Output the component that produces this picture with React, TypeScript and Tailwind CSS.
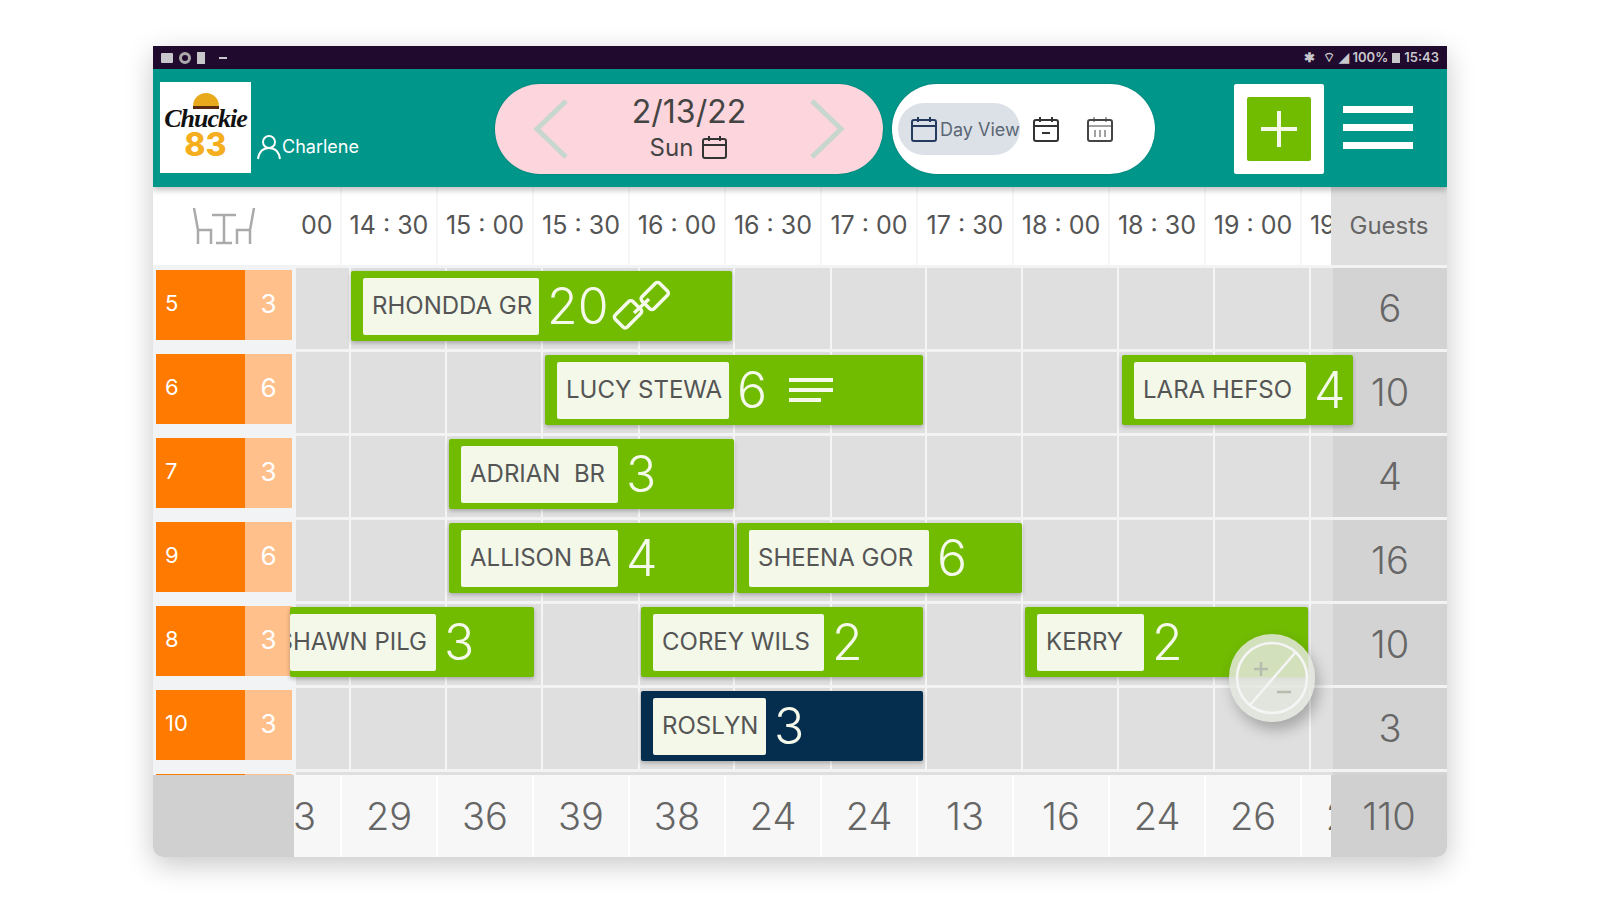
const slotW = 96

const slots = ['14 : 00', '14 : 30', '15 : 00', '15 : 30', '16 : 00', '16 : 30', '17 : 00', '17 : 30', '18 : 00', '18 : 30', '19 : 00', '19 : 30']
const totals = ['33', '29', '36', '39', '38', '24', '24', '13', '16', '24', '26', '22']

interface Booking {
  name: string
  guests: string
  start: number
  width: number
  dark?: boolean
  chip?: number
  clip?: boolean
  link?: boolean
  notes?: boolean
}

interface Row {
  table: string
  seats: string
  guests: string
  bookings: Booking[]
}

const rows: Row[] = [
  { table: '5', seats: '3', guests: '6', bookings: [{ name: 'RHONDDA GR', guests: '20', start: 55, width: 381, chip: 176, link: true }] },
  {
    table: '6',
    seats: '6',
    guests: '10',
    bookings: [
      { name: 'LUCY STEWA', guests: '6', start: 249, width: 378, chip: 172, notes: true },
      { name: 'LARA HEFSO', guests: '4', start: 826, width: 231, chip: 172 },
    ],
  },
  { table: '7', seats: '3', guests: '4', bookings: [{ name: 'ADRIAN  BR', guests: '3', start: 153, width: 285, chip: 157 }] },
  {
    table: '9',
    seats: '6',
    guests: '16',
    bookings: [
      { name: 'ALLISON BA', guests: '4', start: 153, width: 285, chip: 157 },
      { name: 'SHEENA GOR', guests: '6', start: 441, width: 285, chip: 180 },
    ],
  },
  {
    table: '8',
    seats: '3',
    guests: '10',
    bookings: [
      { name: 'SHAWN PILG', guests: '3', start: -6, width: 244, chip: 146, clip: true },
      { name: 'COREY WILS', guests: '2', start: 345, width: 282, chip: 171 },
      { name: 'KERRY', guests: '2', start: 729, width: 283, chip: 107 },
    ],
  },
  { table: '10', seats: '3', guests: '3', bookings: [{ name: 'ROSLYN', guests: '3', start: 345, width: 282, chip: 113, dark: true }] },
]

function GridLines({ color }: { color: string }) {
  return (
    <div className="absolute inset-0 flex">
      <div className={`w-[55px] h-full border-r-2 ${color}`} />
      {[96, 96, 97, 95, 97, 95, 96, 96, 96, 96].map((w, i) => (
        <div key={i} className={`h-full border-r-2 ${color}`} style={{ width: w }} />
      ))}
    </div>
  )
}

function LinkIcon() {
  return (
    <svg width="62" height="62" viewBox="0 0 62 62" fill="none" stroke="#f4f9ea" strokeWidth="3.5" className="ml-0.5 shrink-0">
      <rect x="5" y="31" width="25" height="17" rx="3" transform="rotate(-45 17 40)" />
      <rect x="31" y="13" width="25" height="17" rx="3" transform="rotate(-45 43 21)" />
      <path d="M23 38 38 24" />
    </svg>
  )
}

function NotesIcon() {
  return (
    <div className="ml-[22px] flex flex-col gap-[6px] shrink-0">
      <div className="h-1 w-11 bg-[#f4f9ea]" />
      <div className="h-1 w-11 bg-[#f4f9ea]" />
      <div className="h-1 w-8 bg-[#f4f9ea]" />
    </div>
  )
}

function BookingBar({ booking }: { booking: Booking }) {
  return (
    <div
      className={`absolute top-0 h-[70px] flex items-center overflow-hidden rounded-[2px] shadow-[0_2px_4px_rgba(0,0,0,0.25)] ${booking.dark ? 'bg-[#052e4e]' : 'bg-[#71bb00]'}`}
      style={{ left: booking.start, width: booking.width }}
    >
      <div
        className={`h-[57px] shrink-0 flex items-center rounded-[2px] bg-[#f3f8e9] text-[24px] text-[#555] whitespace-pre ${booking.clip ? 'ml-0 justify-end pr-[9px]' : 'ml-3 pl-[9px]'}`}
        style={{ width: booking.chip }}
      >
        {booking.name}
      </div>
      <span className="ml-2 text-[50px] leading-none font-light text-[#f4f9ea]">{booking.guests}</span>
      {booking.link && <LinkIcon />}
      {booking.notes && <NotesIcon />}
    </div>
  )
}

function TableRow({ row }: { row: Row }) {
  return (
    <div className="h-[84px] flex border-b-0">
      <div className="w-[136px] ml-[3px] mr-[4px] h-[70px] mt-[5px] shrink-0 flex text-white">
        <div className="w-[89px] bg-[#ff7a00] flex items-center pl-[9px] pb-1 text-[22px]">{row.table}</div>
        <div className="flex-1 bg-[#ffc08c] flex items-center justify-center pb-1 text-[26px]">{row.seats}</div>
      </div>
      <div className="w-[1037px] h-[84px] relative bg-[#dfdfdf] border-t-[3px] border-[#f2f3f5] shrink-0">
        <GridLines color="border-[#f5f5f5]" />
        <div className="absolute left-0 right-0 top-[3px] h-[70px]">
          {row.bookings.map(b => (
            <BookingBar key={b.name} booking={b} />
          ))}
        </div>
      </div>
      <div className="flex-1 bg-[#d3d3d3] border-t-[3px] border-[#f2f3f5] flex items-center justify-center text-[38px] font-light text-[#666]">{row.guests}</div>
    </div>
  )
}

export default function App() {
  return (
    <div className="w-[1600px] h-[900px] bg-white pt-[46px] pl-[153px] overflow-hidden font-['Inter','Liberation_Sans',sans-serif]">
      <div className="w-[1294px] h-[811px] flex flex-col overflow-hidden rounded-b-[10px] bg-white shadow-[0_8px_28px_rgba(0,0,0,0.22)]">
        {/* status bar */}
        <div className="h-[23px] shrink-0 bg-[#200a2e] flex items-center justify-between px-2 text-[#c8c8cc]">
          <div className="flex items-center gap-[6px]">
            <div className="w-3 h-[10px] rounded-[1px] bg-[#c8c8cc]" />
            <div className="w-3 h-3 rounded-full border-[3px] border-[#aaa]" />
            <div className="w-2 h-3 bg-[#c8c8cc]" />
            <div className="ml-2 w-2 h-[2px] bg-[#c8c8cc]" />
          </div>
          <div className="flex items-center gap-1 text-[13px] font-semibold leading-none">
            <span>✱</span>
            <span className="ml-1">⌔</span>
            <span>◢</span>
            <span>100%</span>
            <div className="w-2 h-[10px] bg-[#c8c8cc]" />
            <span>15:43</span>
          </div>
        </div>

        {/* header */}
        <div className="h-[118px] shrink-0 bg-[#00968a] relative z-10 flex items-start shadow-[0_3px_6px_rgba(0,0,0,0.25)]">
          <div className="ml-[7px] mt-[13px] w-[91px] h-[91px] bg-white shrink-0 flex flex-col items-center pt-[11px]">
            <div className="w-[26px] h-[16px] rounded-t-full bg-[#e9a91d] border-b-[3px] border-[#5a2a10]" />
            <div className="text-[26px] leading-[20px] italic font-['Liberation_Serif',serif] font-bold text-[#111] tracking-[-1px]">Chuckie</div>
            <div className="text-[32px] leading-[31px] font-extrabold text-[#f5ae1e]">83</div>
          </div>
          <div className="ml-[6px] mt-[64px] flex items-center gap-[1px] text-white text-[18px] w-[238px] shrink-0">
            <svg width="24" height="26" viewBox="0 0 24 26" fill="none" stroke="white" strokeWidth="2">
              <circle cx="12" cy="8" r="6" />
              <path d="M1 25c1-7 5-11 11-11s10 4 11 11" />
            </svg>
            Charlene
          </div>

          <div className="mt-[15px] w-[388px] h-[90px] shrink-0 rounded-full bg-[#fdd5dc] flex items-center justify-between px-[38px] shadow-[0_0_2px_rgba(0,0,0,0.2)]">
            <svg width="36" height="60" viewBox="0 0 36 60" fill="none" stroke="#c7d6cf" strokeWidth="5">
              <path d="M33 2 4 30l29 28" />
            </svg>
            <div className="flex flex-col items-center text-[#444]">
              <span className="text-[32px] leading-[38px]">2/13/22</span>
              <span className="flex items-center gap-[9px] text-[24px] leading-[34px]">
                Sun
                <svg width="26" height="26" viewBox="0 0 26 26" fill="none" stroke="#333" strokeWidth="2">
                  <rect x="1" y="4" width="23" height="19" rx="2" />
                  <path d="M1 10h23M7 1v5M18 1v5" />
                </svg>
              </span>
            </div>
            <svg width="36" height="60" viewBox="0 0 36 60" fill="none" stroke="#c7d6cf" strokeWidth="5">
              <path d="M3 2l29 28L3 58" />
            </svg>
          </div>

          <div className="ml-[9px] mt-[15px] w-[263px] h-[90px] shrink-0 rounded-full bg-white flex items-center pl-[6px] shadow-[0_0_2px_rgba(0,0,0,0.2)]">
            <div className="w-[122px] h-[52px] rounded-full bg-[#dbe1e6] flex items-center pl-[13px] gap-[3px] text-[#5b6675] text-[18px]">
              <svg width="26" height="27" viewBox="0 0 26 27" fill="none" stroke="#243a5e" strokeWidth="2">
                <rect x="1" y="4" width="24" height="21" rx="2" />
                <path d="M1 10h24M7 1v5M19 1v5" />
              </svg>
              Day View
            </div>
            <svg width="26" height="27" viewBox="0 0 26 27" fill="none" stroke="#333" strokeWidth="2" className="ml-[13px]">
              <rect x="1" y="4" width="24" height="21" rx="2" />
              <path d="M1 10h24M7 1v5M19 1v5M9 17h8" />
            </svg>
            <svg width="26" height="27" viewBox="0 0 26 27" fill="none" stroke="#444" strokeWidth="2" className="ml-[28px]">
              <rect x="1" y="4" width="24" height="21" rx="2" />
              <path d="M1 10h24M7 1v5M19 1v5M8 14v7M13 14v7M18 14v7" strokeWidth="1" />
            </svg>
          </div>

          <div className="ml-[79px] mt-[15px] w-[90px] h-[90px] shrink-0 bg-white flex items-center justify-center rounded-[2px]">
            <div className="w-[64px] h-[64px] bg-[#71bb00] flex items-center justify-center rounded-[2px]">
              <div className="relative w-[36px] h-[36px]">
                <div className="absolute left-[16px] top-0 w-1 h-full bg-[#f4f9ea]" />
                <div className="absolute top-[16px] left-0 h-1 w-full bg-[#f4f9ea]" />
              </div>
            </div>
          </div>

          <div className="ml-[19px] mt-[37px] w-[70px] flex flex-col gap-[11px]">
            <div className="h-[7px] bg-white" />
            <div className="h-[7px] bg-white" />
            <div className="h-[7px] bg-white" />
          </div>
        </div>

        {/* time header */}
        <div className="h-[78px] shrink-0 flex text-[#555] text-[25px]">
          <div className="w-[141px] shrink-0 flex items-center justify-center">
            <svg width="64" height="38" viewBox="0 0 64 38" fill="none" stroke="#aaa" strokeWidth="2.5">
              <path d="M2 1l4 22v14M6 23h13v14M62 1l-4 22v14M58 23H45v14M20 8h24M32 8v28M24 36h16" />
            </svg>
          </div>
          <div className="w-[1037px] shrink-0 overflow-hidden flex justify-start">
            <div className="flex shrink-0 ml-[-48px]">
              {slots.map(s => (
                <div key={s} className="shrink-0 flex items-center justify-center whitespace-nowrap border-r-2 border-[#f6f6f6]" style={{ width: slotW }}>
                  {s}
                </div>
              ))}
            </div>
          </div>
          <div className="flex-1 bg-[#dfdfdf] flex items-center justify-center text-[24px] text-[#666]">Guests</div>
        </div>

        {/* table rows */}
        <div className="flex-1 relative overflow-hidden bg-[#f2f3f5]">
          {rows.map(r => (
            <TableRow key={r.table} row={r} />
          ))}
          <div className="flex h-[20px]">
            <div className="w-[136px] ml-[3px] mr-[4px] h-[20px] mt-[5px] shrink-0 flex">
              <div className="w-[89px] bg-[#ff7a00]" />
              <div className="flex-1 bg-[#ffc08c]" />
            </div>
            <div className="w-[1037px] relative bg-[#dfdfdf] border-t-[3px] border-[#f2f3f5] shrink-0">
              <div className="absolute left-[55px] top-[6px] h-2 w-[381px] bg-[#71bb00]" />
              <div className="absolute left-[730px] top-[6px] h-2 w-[327px] bg-[#71bb00]" />
            </div>
            <div className="flex-1 bg-[#d3d3d3] border-t-[3px] border-[#f2f3f5]" />
          </div>

          {/* zoom control */}
          <div className="absolute left-[1076px] top-[369px] w-[86px] h-[88px] rounded-full bg-[#e3e6dd]/85 shadow-[4px_8px_14px_rgba(0,0,0,0.25)] flex items-center justify-center">
            <svg width="74" height="74" viewBox="0 0 74 74" fill="none" stroke="#f5f5f5" strokeWidth="2.5">
              <circle cx="37" cy="37" r="35" />
              <path d="M15 64 60 12" />
              <path d="M19 28h14M26 21v14M42 51h14" stroke="#b7bcae" />
            </svg>
          </div>
        </div>

        {/* totals */}
        <div className="h-[82px] shrink-0 flex text-[38px] font-light text-[#666]">
          <div className="w-[141px] shrink-0 bg-[#d0d0d0]" />
          <div className="w-[1037px] shrink-0 overflow-hidden">
            <div className="flex h-full ml-[-48px] w-[1200px]">
              {totals.map((t, i) => (
                <div key={i} className="shrink-0 bg-[#f7f7f7] border-r-2 border-white flex items-center justify-center" style={{ width: slotW }}>
                  {t}
                </div>
              ))}
            </div>
          </div>
          <div className="flex-1 bg-[#d0d0d0] flex items-center justify-center">110</div>
        </div>
      </div>
    </div>
  )
}
